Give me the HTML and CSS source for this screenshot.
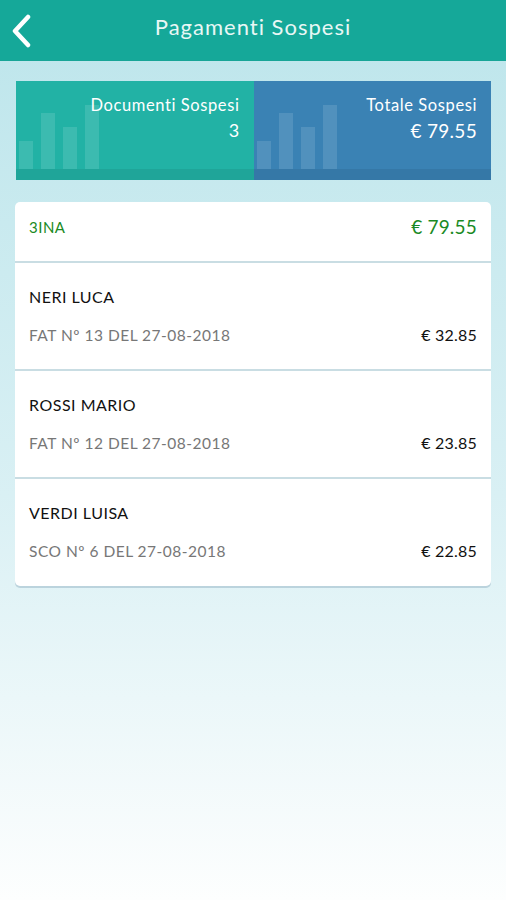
FILE: index.html
```html
<!DOCTYPE html>
<html>
<head>
  <title>Pagamenti Sospesi</title>
  <meta name="viewport" content="width=device-width, initial-scale=1">
  <link rel="stylesheet" href="styles.css">
</head>
<body>
  <div class="topbar">
    <a class="back">
      <svg width="22" height="34" viewBox="0 0 22 34"><path d="M18 3 L5 17 L18 31" fill="none" stroke="#fff" stroke-width="4.5" stroke-linecap="round" stroke-linejoin="round"/></svg>
    </a>
    <div class="topbar-title">Pagamenti Sospesi</div>
  </div>
  <div class="page">
    <div class="summary">
      <div class="summary-box docs">
        <div class="bars"><i style="height:28px"></i><i style="height:56px"></i><i style="height:42px"></i><i style="height:64px"></i></div>
        <div class="summary-text">
          <div class="summary-label">Documenti Sospesi</div>
          <div class="summary-value">3</div>
        </div>
      </div>
      <div class="summary-box total">
        <div class="bars"><i style="height:28px"></i><i style="height:56px"></i><i style="height:42px"></i><i style="height:64px"></i></div>
        <div class="summary-text">
          <div class="summary-label">Totale Sospesi</div>
          <div class="summary-value">€ 79.55</div>
        </div>
      </div>
    </div>
    <div class="list">
      <div class="group-row">
        <span>3INA</span>
        <span class="group-amount">€ 79.55</span>
      </div>
      <div class="doc-row">
        <div class="doc-name">NERI LUCA</div>
        <div class="doc-line"><span class="doc-ref">FAT Nº 13 DEL 27-08-2018</span><span class="doc-amount">€ 32.85</span></div>
      </div>
      <div class="doc-row">
        <div class="doc-name">ROSSI MARIO</div>
        <div class="doc-line"><span class="doc-ref">FAT Nº 12 DEL 27-08-2018</span><span class="doc-amount">€ 23.85</span></div>
      </div>
      <div class="doc-row">
        <div class="doc-name">VERDI LUISA</div>
        <div class="doc-line"><span class="doc-ref">SCO Nº 6 DEL 27-08-2018</span><span class="doc-amount">€ 22.85</span></div>
      </div>
    </div>
  </div>
</body>
</html>
```
FILE: styles.css
```css
* {
  box-sizing: border-box;
  margin: 0;
  padding: 0;
}
html, body {
  height: 100%;
}
body {
  font-family: Lato, "Open Sans", sans-serif;
  background: linear-gradient(180deg, #bce5eb 0%, #d9f0f4 55%, #fdfefe 100%);
  color: #111;
}
.topbar {
  height: 61px;
  background: #15a899;
  display: flex;
  align-items: center;
  position: relative;
  border-bottom: 1px solid #17a597;
}
.back {
  display: flex;
  padding-left: 10px;
  padding-top: 2px;
}
.topbar-title {
  position: absolute;
  left: 0;
  right: 0;
  top: 13px;
  text-align: center;
  color: #e8f7f5;
  font-size: 22px;
  letter-spacing: 1px;
  pointer-events: none;
}
.page {
  padding: 20px 15px 0 15px;
}
.summary {
  display: flex;
  height: 99px;
  margin-left: 1px;
}
.summary-box {
  flex: 1;
  position: relative;
  display: flex;
  justify-content: flex-end;
  color: #fff;
  border-bottom: 11px solid rgba(0,0,0,.07);
}
.summary-box.docs {
  background: #22b2a5;
}
.summary-box.total {
  background: #3a82b4;
}
.bars {
  position: absolute;
  left: 3px;
  bottom: 0;
  display: flex;
  align-items: flex-end;
  gap: 8px;
}
.bars i {
  display: block;
  width: 14px;
  background: rgba(255,255,255,.12);
}
.summary-text {
  position: relative;
  text-align: right;
  padding: 14px 14px 0 0;
}
.summary-label {
  font-size: 16.5px;
  letter-spacing: .6px;
}
.summary-value {
  font-size: 19px;
  margin-top: 4px;
  letter-spacing: .3px;
}
.docs .summary-value {
  font-size: 18px;
}
.list {
  margin-top: 22px;
  background: #fff;
  border-radius: 5px;
  box-shadow: 0 2px 0 rgba(150,180,195,.5);
}
.group-row {
  height: 61px;
  display: flex;
  justify-content: space-between;
  align-items: center;
  padding: 0 14px 10px 14px;
  color: #1a8a24;
  font-size: 15px;
  letter-spacing: .5px;
  border-bottom: 2px solid #c9dde3;
}
.group-amount {
  font-size: 19px;
  letter-spacing: .2px;
}
.doc-row {
  height: 108px;
  padding: 24px 14px 0 14px;
  border-bottom: 2px solid #c9dde3;
}
.doc-row:last-child {
  border-bottom: 0;
  height: 107px;
}
.doc-name {
  font-size: 16px;
  letter-spacing: .5px;
  color: #111;
}
.doc-line {
  display: flex;
  justify-content: space-between;
  align-items: baseline;
  margin-top: 19px;
}
.doc-ref {
  font-size: 15.5px;
  letter-spacing: .5px;
  color: #777;
}
.doc-amount {
  font-size: 16px;
  letter-spacing: .2px;
  color: #111;
}
```
